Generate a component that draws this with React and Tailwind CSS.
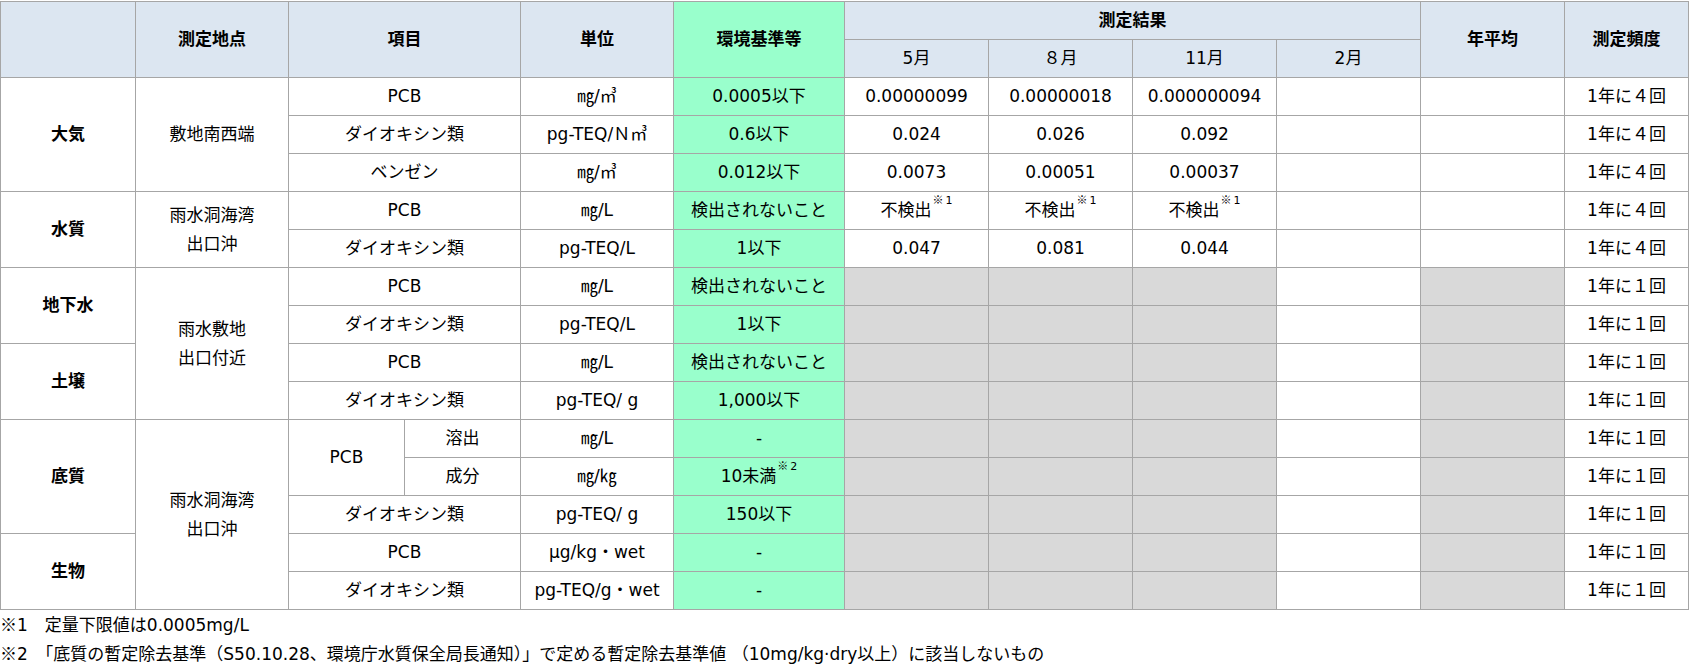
import React from 'react';

// 測定結果テーブル（PCB・ダイオキシン類等）

const td = 'border border-[#a6a6a6] p-0 text-center align-middle leading-[29px]';
const th = 'border border-[#a6a6a6] p-0 text-center align-middle leading-[29px] bg-[#dce6f1]';
const stdCell = `${td} bg-[#99ffcc]`;
const grayCell = `${td} bg-[#d9d9d9]`;

const Kome = ({ n }) => (
    <sup className="text-[11px] align-[7px] ml-px">
        <span className="font-['Noto_Sans_CJK_JP',sans-serif] mr-[2px]">※</span>{n}
    </sup>
);

const Results = ({ values, gray }) => {
    if (gray) {
        return (
            <>
                <td className={grayCell}></td>
                <td className={grayCell}></td>
                <td className={grayCell}></td>
                <td className={td}></td>
                <td className={grayCell}></td>
            </>
        );
    }
    return (
        <>
            {values.map((v, i) => (
                <td key={i} className={td}>{v}</td>
            ))}
            <td className={td}></td>
            <td className={td}></td>
        </>
    );
};

const Item = ({ name, unit, std, values, gray, freq }) => (
    <>
        <td colSpan={2} className={td}>{name}</td>
        <td className={td}>{unit}</td>
        <td className={stdCell}>{std}</td>
        <Results values={values} gray={gray} />
        <td className={td}>{freq}</td>
    </>
);

const Label = ({ rows, children }) => (
    <td rowSpan={rows} className={`${td} font-bold`}>{children}</td>
);

const Place = ({ rows, children }) => (
    <td rowSpan={rows} className={td}>{children}</td>
);

const undetected = (
    <>
        不検出<Kome n="1" />
    </>
);

export default function App() {
    return (
        <div className="w-[1690px] h-[664px] bg-white text-black text-[17px] font-['DejaVu_Sans','Noto_Sans_CJK_JP',sans-serif] overflow-hidden">
            <table className="mt-px w-[1688px] table-fixed border-collapse">
                <colgroup>
                    <col className="w-[135px]" />
                    <col className="w-[153px]" />
                    <col className="w-[116px]" />
                    <col className="w-[116px]" />
                    <col className="w-[153px]" />
                    <col className="w-[171px]" />
                    <col className="w-[144px]" />
                    <col className="w-[144px]" />
                    <col className="w-[144px]" />
                    <col className="w-[144px]" />
                    <col className="w-[144px]" />
                    <col className="w-[124px]" />
                </colgroup>
                <thead>
                    <tr className="h-[38px]">
                        <th rowSpan={2} className={th}></th>
                        <th rowSpan={2} className={th}>測定地点</th>
                        <th rowSpan={2} colSpan={2} className={th}>項目</th>
                        <th rowSpan={2} className={th}>単位</th>
                        <th rowSpan={2} className={`${th} !bg-[#99ffcc]`}>環境基準等</th>
                        <th colSpan={4} className={th}>測定結果</th>
                        <th rowSpan={2} className={th}>年平均</th>
                        <th rowSpan={2} className={th}>測定頻度</th>
                    </tr>
                    <tr className="h-[38px]">
                        <th className={`${th} font-normal`}>5月</th>
                        <th className={`${th} font-normal`}>８月</th>
                        <th className={`${th} font-normal`}>11月</th>
                        <th className={`${th} font-normal`}>2月</th>
                    </tr>
                </thead>
                <tbody>
                    {/* 大気 */}
                    <tr className="h-[38px]">
                        <Label rows={3}>大気</Label>
                        <Place rows={3}>敷地南西端</Place>
                        <Item name="PCB" unit="㎎/㎥" std="0.0005以下" values={['0.00000099', '0.00000018', '0.000000094']} freq="1年に４回" />
                    </tr>
                    <tr className="h-[38px]">
                        <Item name="ダイオキシン類" unit="pg-TEQ/Ｎ㎥" std="0.6以下" values={['0.024', '0.026', '0.092']} freq="1年に４回" />
                    </tr>
                    <tr className="h-[38px]">
                        <Item name="ベンゼン" unit="㎎/㎥" std="0.012以下" values={['0.0073', '0.00051', '0.00037']} freq="1年に４回" />
                    </tr>

                    {/* 水質 */}
                    <tr className="h-[38px]">
                        <Label rows={2}>水質</Label>
                        <Place rows={2}>雨水洞海湾<br />出口沖</Place>
                        <Item name="PCB" unit="㎎/L" std="検出されないこと" values={[undetected, undetected, undetected]} freq="1年に４回" />
                    </tr>
                    <tr className="h-[38px]">
                        <Item name="ダイオキシン類" unit="pg-TEQ/L" std="1以下" values={['0.047', '0.081', '0.044']} freq="1年に４回" />
                    </tr>

                    {/* 地下水 */}
                    <tr className="h-[38px]">
                        <Label rows={2}>地下水</Label>
                        <Place rows={4}>雨水敷地<br />出口付近</Place>
                        <Item name="PCB" unit="㎎/L" std="検出されないこと" gray freq="1年に１回" />
                    </tr>
                    <tr className="h-[38px]">
                        <Item name="ダイオキシン類" unit="pg-TEQ/L" std="1以下" gray freq="1年に１回" />
                    </tr>

                    {/* 土壌 */}
                    <tr className="h-[38px]">
                        <Label rows={2}>土壌</Label>
                        <Item name="PCB" unit="㎎/L" std="検出されないこと" gray freq="1年に１回" />
                    </tr>
                    <tr className="h-[38px]">
                        <Item name="ダイオキシン類" unit="pg-TEQ/ g" std="1,000以下" gray freq="1年に１回" />
                    </tr>

                    {/* 底質 */}
                    <tr className="h-[38px]">
                        <Label rows={3}>底質</Label>
                        <Place rows={5}>雨水洞海湾<br />出口沖</Place>
                        <td rowSpan={2} className={td}>PCB</td>
                        <td className={td}>溶出</td>
                        <td className={td}>㎎/L</td>
                        <td className={stdCell}>-</td>
                        <Results gray />
                        <td className={td}>1年に１回</td>
                    </tr>
                    <tr className="h-[38px]">
                        <td className={td}>成分</td>
                        <td className={td}>㎎/㎏</td>
                        <td className={stdCell}>10未満<Kome n="2" /></td>
                        <Results gray />
                        <td className={td}>1年に１回</td>
                    </tr>
                    <tr className="h-[38px]">
                        <Item name="ダイオキシン類" unit="pg-TEQ/ g" std="150以下" gray freq="1年に１回" />
                    </tr>

                    {/* 生物 */}
                    <tr className="h-[38px]">
                        <Label rows={2}>生物</Label>
                        <Item name="PCB" unit="μg/kg・wet" std="-" gray freq="1年に１回" />
                    </tr>
                    <tr className="h-[38px]">
                        <Item name="ダイオキシン類" unit="pg-TEQ/g・wet" std="-" gray freq="1年に１回" />
                    </tr>
                </tbody>
            </table>

            <div className="leading-[27px]">
                <p>
                    <span className="font-['Noto_Sans_CJK_JP',sans-serif]">※</span>1　定量下限値は0.0005mg/L
                </p>
                <p>
                    <span className="font-['Noto_Sans_CJK_JP',sans-serif]">※</span>2　「底質の暫定除去基準（S50.10.28、環境庁水質保全局長通知）」で定める暫定除去基準値 （10mg/kg·dry以上）に該当しないもの
                </p>
            </div>
        </div>
    );
}
